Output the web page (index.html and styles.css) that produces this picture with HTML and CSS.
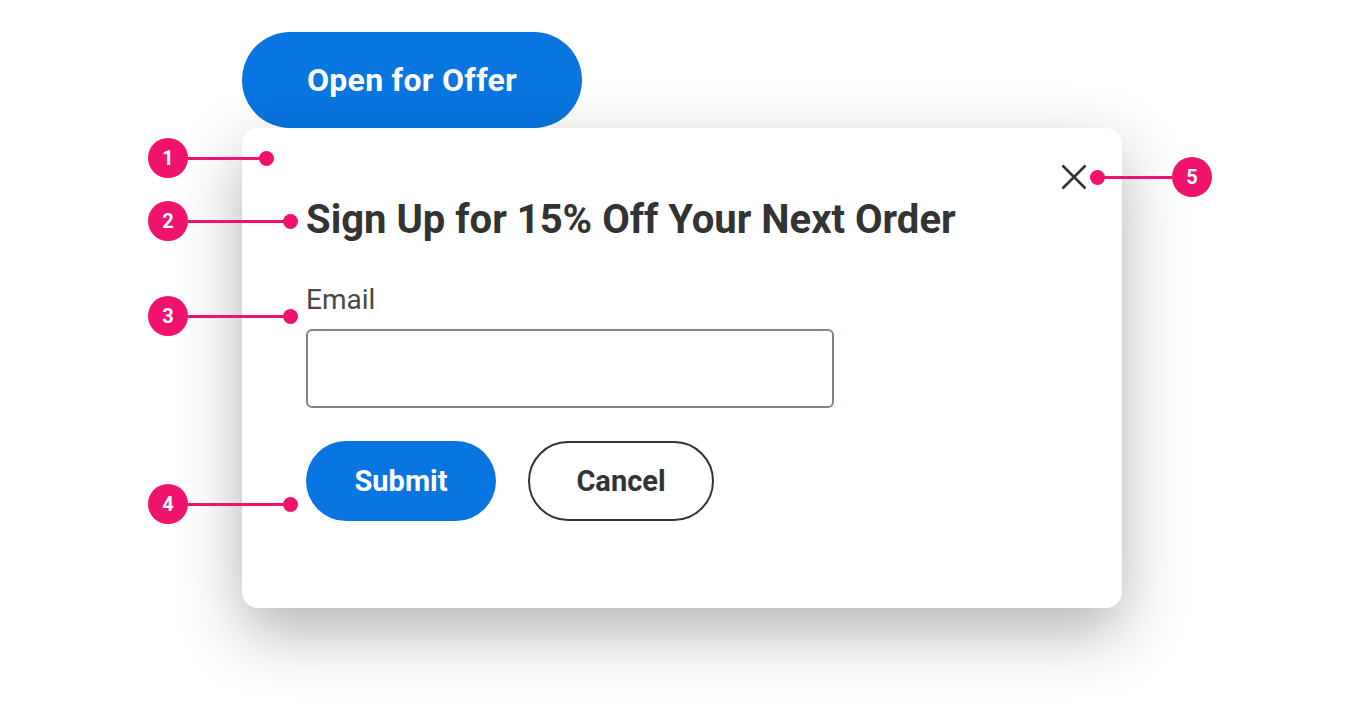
FILE: index.html
```html
<!DOCTYPE html>
<html lang="en">
<head>
<meta charset="utf-8">
<title>Modal</title>
<link rel="stylesheet" href="styles.css">
</head>
<body>
<div class="stage">
  <button class="btn btn-primary btn-offer" type="button">Open for Offer</button>
  <div class="dialog" role="dialog" aria-labelledby="dlg-title">
    <div class="dialog-top">
      <button class="close" type="button" aria-label="Close">
        <svg width="26" height="26" viewBox="0 0 26 26"><path d="M1.5 1.5 L24.5 24.5 M24.5 1.5 L1.5 24.5" stroke="#333333" stroke-width="2.6" fill="none"/></svg>
      </button>
    </div>
    <h2 class="dialog-title" id="dlg-title">Sign Up for 15% Off Your Next Order</h2>
    <label class="field-label" for="email">Email</label>
    <input class="field-input" id="email" type="text">
    <div class="actions">
      <button class="btn btn-primary btn-submit" type="button">Submit</button>
      <button class="btn btn-secondary btn-cancel" type="button">Cancel</button>
    </div>
  </div>

  <div class="note note-1"><span class="num">1</span><span class="line"></span><span class="dot"></span></div>
  <div class="note note-2"><span class="num">2</span><span class="line"></span><span class="dot"></span></div>
  <div class="note note-3"><span class="num">3</span><span class="line"></span><span class="dot"></span></div>
  <div class="note note-4"><span class="num">4</span><span class="line"></span><span class="dot"></span></div>
  <div class="note note-5 note-rev"><span class="dot"></span><span class="line"></span><span class="num">5</span></div>
</div>
</body>
</html>
```
FILE: styles.css
```css
* { box-sizing: border-box; }
html, body { margin: 0; padding: 0; background: #ffffff; }
body { font-family: Roboto, "Liberation Sans", Arial, sans-serif; }

.stage {
  position: relative;
  width: 1360px;
  height: 728px;
  padding: 32px 0 0 242px;
  display: flex;
  flex-direction: column;
  align-items: flex-start;
  overflow: hidden;
}

.btn {
  font-family: Roboto, "Liberation Sans", Arial, sans-serif;
  font-weight: 700;
  border-radius: 999px;
  cursor: pointer;
  display: flex;
  align-items: center;
  justify-content: center;
  padding: 0;
}
.btn-primary { background: #0875e1; color: #ffffff; border: none; }
.btn-secondary { background: #ffffff; color: #333333; border: 2px solid #333333; }

.btn-offer {
  width: 340px;
  height: 96px;
  font-size: 32px;
  letter-spacing: 0.3px;
}

.dialog {
  width: 880px;
  height: 480px;
  background: #ffffff;
  border-radius: 16px;
  padding: 29px 28px 0 64px;
  box-shadow: 0 24px 64px rgba(0, 0, 0, 0.3);
  display: flex;
  flex-direction: column;
  align-items: flex-start;
}

.dialog-top {
  align-self: stretch;
  display: flex;
  justify-content: flex-end;
}
.close {
  width: 40px;
  height: 40px;
  border: none;
  background: transparent;
  padding: 0;
  display: flex;
  align-items: center;
  justify-content: center;
  cursor: pointer;
}

.dialog-title {
  margin: -1px 0 0 0;
  font-size: 40px;
  line-height: 48px;
  font-weight: 700;
  color: #333333;
  white-space: nowrap;
}

.field-label {
  margin-top: 40px;
  font-size: 28px;
  line-height: 32px;
  font-weight: 400;
  color: #494949;
}

.field-input {
  margin-top: 13px;
  width: 528px;
  height: 79px;
  border: 2px solid #7b858f;
  border-radius: 6px;
  background: #ffffff;
  font-size: 24px;
  padding: 0 16px;
}

.actions {
  margin-top: 33px;
  display: flex;
  gap: 32px;
}
.btn-submit { width: 190px; height: 80px; font-size: 29px; }
.btn-cancel { width: 186px; height: 80px; font-size: 29px; }

/* annotation callouts */
.note {
  position: absolute;
  display: flex;
  align-items: center;
  height: 40px;
}
.note .num {
  width: 40px;
  height: 40px;
  border-radius: 50%;
  background: #f0136d;
  color: #ffffff;
  font-weight: 700;
  font-size: 20px;
  display: flex;
  align-items: center;
  justify-content: center;
  flex: none;
}
.note .line {
  height: 3px;
  background: #f0136d;
  flex: 1;
}
.note .dot {
  width: 15px;
  height: 15px;
  border-radius: 50%;
  background: #f0136d;
  flex: none;
  margin-left: -2px;
}
.note-rev .dot { margin-left: 0; margin-right: -2px; }

.note-1 { left: 148px; top: 138px; width: 126px; }
.note-2 { left: 148px; top: 201px; width: 150px; }
.note-3 { left: 148px; top: 296px; width: 150px; }
.note-4 { left: 148px; top: 484px; width: 150px; }
.note-5 { left: 1090px; top: 157px; width: 122px; }
```
